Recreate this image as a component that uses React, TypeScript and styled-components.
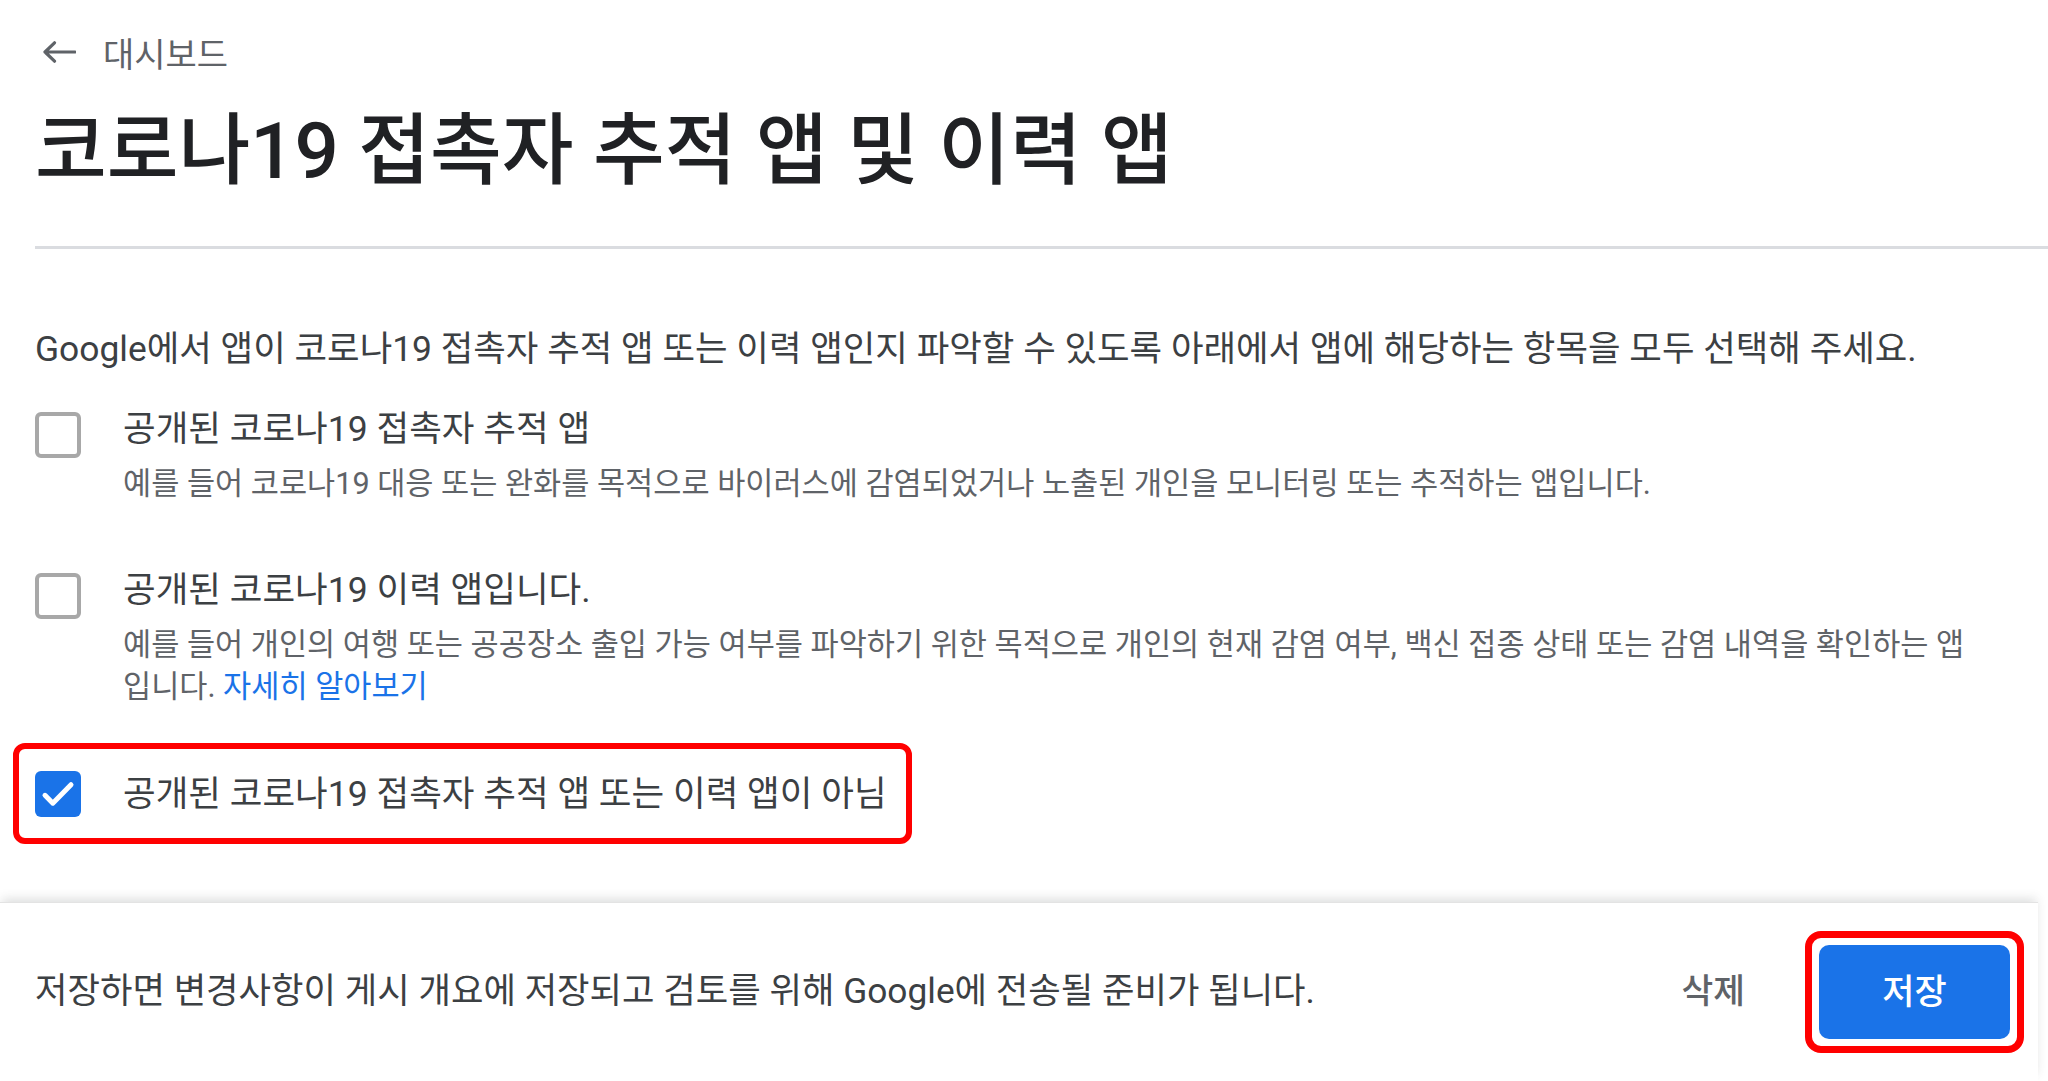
import styled, { createGlobalStyle } from "styled-components";

const GlobalStyle = createGlobalStyle`
  html, body {
    margin: 0;
    padding: 0;
    background: #ffffff;
  }
  body {
    font-family: Roboto, "Noto Sans CJK KR", sans-serif;
    color: #3c4043;
  }
`;

const Page = styled.div`
  min-height: 100vh;
  display: flex;
  flex-direction: column;
  box-sizing: border-box;
`;

const Main = styled.main`
  padding: 30px 0 0 35px;
  display: flex;
  flex-direction: column;
`;

const BackLink = styled.a`
  display: flex;
  align-items: center;
  gap: 27px;
  height: 44px;
  padding-left: 7px;
  font-size: 34px;
  color: #5f6368;
  text-decoration: none;
  cursor: pointer;
`;

const Title = styled.h1`
  margin: 28px 0 0;
  font-size: 78px;
  line-height: 100px;
  font-weight: 500;
  color: #202124;
`;

const Divider = styled.hr`
  margin: 44px 0 0;
  border: none;
  height: 3px;
  background: #dadce0;
`;

const Intro = styled.p`
  margin: 76px 0 0;
  font-size: 35.4px;
  line-height: 48px;
  color: #3c4043;
`;

const OptionList = styled.div`
  display: flex;
  flex-direction: column;
`;

const Option = styled.label<{ $top: number }>`
  display: grid;
  grid-template-columns: 46px 1fr;
  column-gap: 42px;
  margin-top: ${(p) => p.$top}px;
  cursor: pointer;
`;

const Box = styled.span<{ $checked?: boolean }>`
  width: 46px;
  height: 46px;
  margin-top: 6px;
  box-sizing: border-box;
  border-radius: 6px;
  border: ${(p) => (p.$checked ? "none" : "4.5px solid #a8a8a8")};
  background: ${(p) => (p.$checked ? "#1a73e8" : "#ffffff")};
  display: flex;
  align-items: center;
  justify-content: center;
`;

const OptionText = styled.div`
  display: flex;
  flex-direction: column;
`;

const OptionLabel = styled.span`
  font-size: 35.5px;
  line-height: 46px;
  color: #3c4043;
`;

const Description = styled.p`
  margin: 11px 0 0;
  max-width: 1860px;
  font-size: 30.6px;
  line-height: 42px;
  color: #5f6368;
`;

const LearnMore = styled.a`
  color: #1a73e8;
  text-decoration: none;
`;

const Highlight = styled.div`
  align-self: flex-start;
  margin: 35px 0 0 -22px;
  padding: 22px 19px 21px 16px;
  border: 6px solid #ff0000;
  border-radius: 12px;

  ${Option} {
    margin-top: 0;
  }
  ${Box} {
    margin-top: 0;
  }
`;

const Footer = styled.footer`
  margin-top: auto;
  margin-right: 10px;
  height: 178px;
  display: flex;
  align-items: center;
  padding: 0 14px 0 35px;
  box-shadow: 0 -5px 10px -2px rgba(60, 64, 67, 0.18);
  border-top: 1px solid #e3e3e3;
  background: #ffffff;
`;

const FooterNote = styled.p`
  margin: 0 0 10px;
  flex: 1;
  font-size: 35.3px;
  color: #3c4043;
`;

const TextButton = styled.button`
  border: none;
  background: none;
  padding: 0;
  margin: 0 60px 8px 0;
  font-family: inherit;
  font-size: 34.5px;
  font-weight: 500;
  color: #5f6368;
  cursor: pointer;
`;

const SaveFrame = styled.div`
  padding: 7px;
  border: 7px solid #ff0000;
  border-radius: 16px;
`;

const SaveButton = styled.button`
  width: 191px;
  height: 94px;
  padding: 0 0 8px;
  border: none;
  border-radius: 10px;
  background: #1a73e8;
  color: #ffffff;
  font-family: inherit;
  font-size: 35px;
  font-weight: 500;
  display: block;
  cursor: pointer;
`;

const ArrowBack = () => (
  <svg width="34" height="22" viewBox="0 0 34 22" fill="none">
    <path
      d="M33 11H3M12.5 1.8L3 11l9.5 9.2"
      stroke="#5f6368"
      strokeWidth="3.2"
      strokeLinecap="round"
      strokeLinejoin="round"
    />
  </svg>
);

const Check = () => (
  <svg width="40" height="40" viewBox="0 0 24 24" fill="none">
    <path
      d="M4.2 12.8l4.7 4.7L19.8 6.4"
      stroke="#ffffff"
      strokeWidth="3"
      strokeLinecap="round"
      strokeLinejoin="round"
    />
  </svg>
);

export default function App() {
  return (
    <Page>
      <GlobalStyle />
      <Main>
        <BackLink>
          <ArrowBack />
          <span>대시보드</span>
        </BackLink>
        <Title>코로나19 접촉자 추적 앱 및 이력 앱</Title>
        <Divider />
        <Intro>
          Google에서 앱이 코로나19 접촉자 추적 앱 또는 이력 앱인지 파악할 수 있도록 아래에서 앱에 해당하는 항목을 모두
          선택해 주세요.
        </Intro>
        <OptionList>
          <Option $top={33}>
            <Box />
            <OptionText>
              <OptionLabel>공개된 코로나19 접촉자 추적 앱</OptionLabel>
              <Description>
                예를 들어 코로나19 대응 또는 완화를 목적으로 바이러스에 감염되었거나 노출된 개인을 모니터링 또는 추적하는
                앱입니다.
              </Description>
            </OptionText>
          </Option>
          <Option $top={62}>
            <Box />
            <OptionText>
              <OptionLabel>공개된 코로나19 이력 앱입니다.</OptionLabel>
              <Description>
                예를 들어 개인의 여행 또는 공공장소 출입 가능 여부를 파악하기 위한 목적으로 개인의 현재 감염 여부, 백신 접종
                상태 또는 감염 내역을 확인하는 앱입니다. <LearnMore>자세히 알아보기</LearnMore>
              </Description>
            </OptionText>
          </Option>
          <Highlight>
            <Option $top={0}>
              <Box $checked>
                <Check />
              </Box>
              <OptionText>
                <OptionLabel>공개된 코로나19 접촉자 추적 앱 또는 이력 앱이 아님</OptionLabel>
              </OptionText>
            </Option>
          </Highlight>
        </OptionList>
      </Main>
      <Footer>
        <FooterNote>저장하면 변경사항이 게시 개요에 저장되고 검토를 위해 Google에 전송될 준비가 됩니다.</FooterNote>
        <TextButton>삭제</TextButton>
        <SaveFrame>
          <SaveButton>저장</SaveButton>
        </SaveFrame>
      </Footer>
    </Page>
  );
}
